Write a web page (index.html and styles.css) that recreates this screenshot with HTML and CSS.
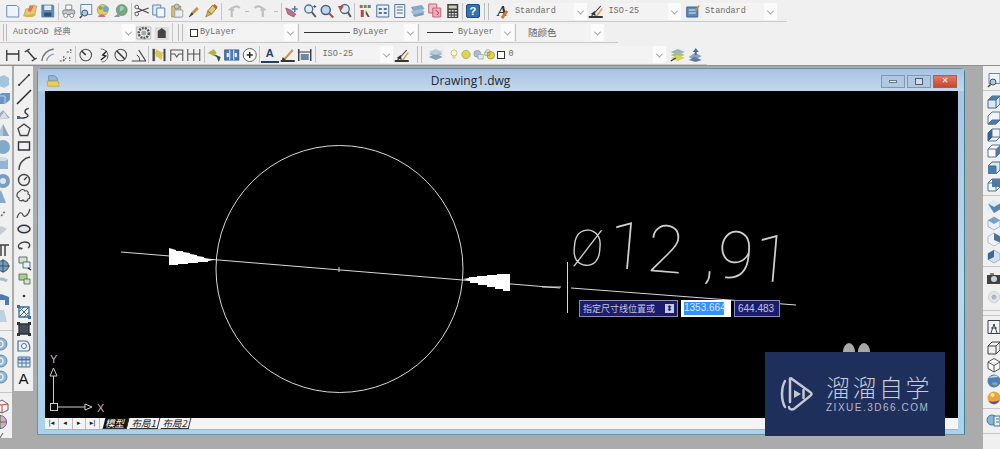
FILE: index.html
```html
<!DOCTYPE html>
<html lang="zh">
<head>
<meta charset="utf-8">
<title>Drawing1.dwg</title>
<link rel="stylesheet" href="styles.css">
</head>
<body>
<svg class="defs" aria-hidden="true">
<symbol id="new" viewBox="0 0 16 16"><path d="M2 2.500h10l2 2v9.500H2z" fill="#eef3fa" stroke="#5b86b5"/></symbol>
<symbol id="open" viewBox="0 0 16 16"><path d="M1 13 3 6l6-1 1-3 4 1-2 9z" fill="#e6c25c" stroke="#a98a3a" stroke-width=".6"/><path d="M7 2l4 1-3 6-3-1z" fill="#d96b4e"/><path d="M1 14l8-3 4 1-3 2z" fill="#d9a83c"/></symbol>
<symbol id="doc" viewBox="0 0 16 16"><path d="M3 2h7l3 3v3H3z" fill="#8fb3d6" stroke="#4b7295" stroke-width=".7"/><path d="M1 8h13l1 6H2z" fill="#f2cd3f" stroke="#b6952a" stroke-width=".7"/></symbol>
<symbol id="save" viewBox="0 0 16 16"><path d="M2 2h11l1 1v11H2z" fill="#4f7fb5" stroke="#2f5c90" stroke-width=".6"/><rect x="4.500" y="2.500" width="7" height="4.500" fill="#dfe9f4"/><rect x="4.500" y="9.500" width="7" height="4" fill="#1e3f6b"/></symbol>
<symbol id="plot" viewBox="0 0 16 16"><path d="M5 2h6v5H5z" fill="#fff" stroke="#666" stroke-width=".8"/><rect x="2" y="7" width="12" height="4.500" rx="1.500" fill="#b8c4d2" stroke="#666" stroke-width=".8"/><circle cx="5" cy="12.500" r="2" fill="#fff" stroke="#666" stroke-width=".8"/><circle cx="11" cy="12.500" r="2" fill="#fff" stroke="#666" stroke-width=".8"/></symbol>
<symbol id="preview" viewBox="0 0 16 16"><path d="M3 1.500h11v10H3z" fill="#eef3fa" stroke="#5b7fa5"/><circle cx="7" cy="10" r="3" fill="#a8c6e0" stroke="#345"/><path d="M4.500 12.500 2 15" stroke="#333" stroke-width="1.500"/></symbol>
<symbol id="publish" viewBox="0 0 16 16"><circle cx="7" cy="7" r="5.500" fill="#e3c84f" stroke="#8a7a30" stroke-width=".6"/><circle cx="10" cy="6" r="3" fill="#6d9bc8"/><path d="M2 13l5-2 3 3H3z" fill="#c55b7a"/><circle cx="5" cy="5" r="1.800" fill="#5c9e5a"/></symbol>
<symbol id="globe" viewBox="0 0 16 16"><circle cx="9" cy="7" r="5.500" fill="#6aa36a" stroke="#4b7a55" stroke-width=".6"/><path d="M8 3c3 0 4 2 2 4s-3 1-3-1z" fill="#9dc3e6"/><path d="M1 14l5-4 1 4z" fill="#7d8ea0"/></symbol>
<symbol id="cut" viewBox="0 0 16 16"><path d="M1 4l14 6M1 10l14-5" stroke="#333" stroke-width="1.100" fill="none"/><circle cx="3" cy="4" r="1.800" fill="#fff" stroke="#555"/><circle cx="3" cy="11" r="1.800" fill="#fff" stroke="#555"/></symbol>
<symbol id="copy" viewBox="0 0 16 16"><path d="M2 2h8v10H2z" fill="#dfe9f4" stroke="#4f7aa8"/><path d="M6 5h8v9H6z" fill="#f4f8fc" stroke="#4f7aa8"/></symbol>
<symbol id="paste" viewBox="0 0 16 16"><path d="M3 3h9v11H3z" fill="#dcb96a" stroke="#8d7440" stroke-width=".7"/><circle cx="8" cy="3.500" r="2.500" fill="#b9c6a8" stroke="#667" stroke-width=".7"/><path d="M6 7h8v7H6z" fill="#e9eef3" stroke="#6c8a9a" stroke-width=".7"/></symbol>
<symbol id="brush" viewBox="0 0 16 16"><path d="M3 14l3-5 2 2-4 3z" fill="#333"/><path d="M6 9l5-5 2 2-5 5z" fill="#c0862e"/></symbol>
<symbol id="match" viewBox="0 0 16 16"><path d="M2 14l2-6 4 3z" fill="#d6a53a" stroke="#7a5d22" stroke-width=".6"/><path d="M4 8l5-6 4 3-5 6z" fill="#e5c95a" stroke="#333" stroke-width=".6"/><path d="M11 1l3 3-2 2-3-3z" fill="#c5552f"/></symbol>
<symbol id="undo" viewBox="0 0 16 16"><path d="M5 14V7c0-3 5-5 8-2" stroke="#bbb" stroke-width="2.200" fill="none"/><path d="M1 7l4-3 3 4z" fill="#bbb"/></symbol>
<symbol id="redo" viewBox="0 0 16 16"><path d="M11 14V7c0-3-5-5-8-2" stroke="#bbb" stroke-width="2.200" fill="none"/><path d="M15 7l-4-3-3 4z" fill="#bbb"/></symbol>
<symbol id="pan" viewBox="0 0 16 16"><path d="M2 5l5 2 5 4-2 3-6-3z" fill="#b5657c" stroke="#6b3a4a" stroke-width=".6"/><path d="M11 3v6M8 6h6" stroke="#3a6ea5" stroke-width="1.500"/></symbol>
<symbol id="zoomr" viewBox="0 0 16 16"><circle cx="7" cy="6" r="4" fill="#dfeaf5" stroke="#40607f" stroke-width="1.300"/><path d="M10 9l4 5" stroke="#444" stroke-width="2"/><path d="M13 2v3M11.500 3.500h3" stroke="#444"/></symbol>
<symbol id="zoomw" viewBox="0 0 16 16"><circle cx="7" cy="7" r="4.500" fill="#bcd3ea" stroke="#305679" stroke-width="1.500"/><path d="M10.500 10.500l4 4" stroke="#a83b2e" stroke-width="2.200"/></symbol>
<symbol id="zoomp" viewBox="0 0 16 16"><circle cx="8" cy="6" r="4.500" fill="#dfeaf5" stroke="#40607f" stroke-width="1.300"/><path d="M11 9l3 5" stroke="#444" stroke-width="2"/><path d="M1 3h6L4 8z" fill="#a33c3c"/></symbol>
<symbol id="props" viewBox="0 0 16 16"><path d="M2 1h12v9H2z" fill="#f6f0d8"/><path d="M3 2h3v3H3z" fill="#c53c8a"/><path d="M7 2h3v3H7z" fill="#3c9a4e"/><path d="M11 2h3v3h-3z" fill="#3c6ec5"/><path d="M4 7h3v7H4z" fill="#b03535"/><path d="M9 7l4 7h-2l-2-3z" fill="#444"/></symbol>
<symbol id="grid" viewBox="0 0 16 16"><path d="M2 2h12v12H2z" fill="#e8eef5" stroke="#3d6690"/><path d="M4 5h3v2H4zM9 5h3v2H9zM4 9h3v2H4zM9 9h3v2H9z" fill="#3d6690"/></symbol>
<symbol id="sheet" viewBox="0 0 16 16"><path d="M3 1.500h10v13H3z" fill="#eef3fa" stroke="#48698c"/><path d="M5 4h6M5 7h6M5 10h6" stroke="#3d6690" stroke-width="1.200"/></symbol>
<symbol id="layersb" viewBox="0 0 16 16"><path d="M1 4l11-2 3 4-11 3z" fill="#7ba0c2"/><path d="M1 8l11-2 3 3-11 4z" fill="#98b8d4"/><path d="M3 12l11-3v3l-9 2z" fill="#6f95b8"/></symbol>
<symbol id="markup" viewBox="0 0 16 16"><path d="M2 1h8v9H2z" fill="#efb9c4" stroke="#c0566b"/><path d="M6 5h8v9H6z" fill="#e9a5b3" stroke="#c0566b"/><path d="M9 7l3 3-2 2" stroke="#a02b40" fill="none"/></symbol>
<symbol id="calc" viewBox="0 0 16 16"><rect x="2.500" y="1" width="11" height="14" fill="#2c2c2c"/><rect x="4" y="2.500" width="8" height="3" fill="#c9c9b6"/><path d="M4 7h2v1.500H4zM7 7h2v1.500H7zM10 7h2v1.500h-2zM4 10h2v1.500H4zM7 10h2v1.500H7zM10 10h2v1.500h-2zM4 12.500h2V14H4zM7 12.500h2V14H7zM10 12.500h2V14h-2z" fill="#ddd"/></symbol>
<symbol id="dimstyle" viewBox="0 0 16 16"><path d="M1 14h14" stroke="#222" stroke-width="1.800"/><path d="M3 14 13 3" stroke="#222" stroke-width="1.100"/><path d="M8 13l6-8 1 1-5 7z" fill="#d29a3a"/><path d="M3 11l4-3 1 5z" fill="#222"/></symbol>
<symbol id="tstyle" viewBox="0 0 16 16"><path d="M2 4h11v10H2z" fill="#4d7faf" stroke="#2d5680"/><path d="M4 7h7M4 10h7" stroke="#dbe7f2"/><path d="M10 8l4-6 1 1-4 6z" fill="#c9872f"/></symbol>
<symbol id="ws1" viewBox="0 0 16 16"><circle cx="8" cy="8" r="5" fill="none" stroke="#444" stroke-width="2.500" stroke-dasharray="2 1"/><circle cx="8" cy="8" r="2.500" fill="#8aa"/><path d="M1 2h14v12H1z" fill="none" stroke="#999" stroke-width=".7"/></symbol>
<symbol id="ws2" viewBox="0 0 16 16"><path d="M1 2h14v13H1z" fill="#dbdbdb"/><path d="M4 13V6l4-3 4 3v7z" fill="#333"/></symbol>
<symbol id="dlin" viewBox="0 0 16 16"><path d="M2 3v11M14 3v11M2 7h12" stroke="#222" stroke-width="1.300" fill="none"/></symbol>
<symbol id="dali" viewBox="0 0 16 16"><path d="M2 5l5-3M9 14l5-3M4 3l8 9" stroke="#222" stroke-width="1.400" fill="none"/></symbol>
<symbol id="darc" viewBox="0 0 16 16"><path d="M2 14C3 7 8 3 14 2" stroke="#666" stroke-width="1.400" fill="none"/><path d="M7 14C7 11 10 8 14 7" stroke="#7a8ea5" stroke-width="1.200" fill="none"/></symbol>
<symbol id="dord" viewBox="0 0 16 16"><path d="M2 14h4l3-4M9 5h3M13 2v4M6 9v5M12 10v4" stroke="#444" fill="none" stroke-dasharray="2 1"/></symbol>
<symbol id="drad" viewBox="0 0 16 16"><circle cx="8" cy="8" r="5.800" fill="none" stroke="#444" stroke-width="1.100"/><path d="M8 8 4 4" stroke="#222" stroke-width="1.600"/></symbol>
<symbol id="djog" viewBox="0 0 16 16"><path d="M5 2c5 0 8 4 7 8s-4 5-6 5" stroke="#555" fill="none"/><path d="M11 4 7 8l3 1-5 4" stroke="#111" stroke-width="1.400" fill="none"/></symbol>
<symbol id="ddia" viewBox="0 0 16 16"><circle cx="8" cy="8" r="5.800" fill="none" stroke="#444" stroke-width="1.100"/><path d="M4 4l8 8" stroke="#222" stroke-width="1.600"/></symbol>
<symbol id="dang" viewBox="0 0 16 16"><path d="M1 14h14L8 3" stroke="#333" fill="none" stroke-width="1.200"/><path d="M6 8c2 1 3 3 3 6" stroke="#333" fill="none"/></symbol>
<symbol id="dquick" viewBox="0 0 16 16"><path d="M2 2h2v12H2zM13 2h1.500v12H13zM2 6h12" fill="#333" stroke="#333" stroke-width=".4"/><path d="M5 2l7 4-1 7-6-4z" fill="#d7c33c"/></symbol>
<symbol id="dbase" viewBox="0 0 16 16"><path d="M2 14V3h12v11M2 7h4l2 3 2-3h4" stroke="#444" fill="none" stroke-width="1.100"/></symbol>
<symbol id="dcont" viewBox="0 0 16 16"><path d="M2 14V2M8 14V2M14 14V2M2 7h12" stroke="#444" fill="none" stroke-width="1.100"/></symbol>
<symbol id="dlead" viewBox="0 0 16 16"><path d="M3 5l8 5" stroke="#3b3b3b" stroke-width="1.300"/><path d="M1 6l6-4 3 4-3 3z" fill="#a7b03a"/><path d="M9 8l5 2-2 5z" fill="#26452a"/></symbol>
<symbol id="dtol" viewBox="0 0 16 16"><rect x="1" y="3" width="14" height="10" fill="#3a73b0" stroke="#1e4a7c"/><path d="M6 3v10M10 3v10" stroke="#e7eef5"/><rect x="3" y="6" width="2" height="4" fill="#fff"/><rect x="11" y="6" width="2" height="4" fill="#fff"/></symbol>
<symbol id="dcen" viewBox="0 0 16 16"><circle cx="8" cy="8" r="6.500" fill="#fff" stroke="#555"/><path d="M5 8h6M8 5v6" stroke="#111" stroke-width="1.500"/></symbol>
<symbol id="dang2" viewBox="0 0 16 16"><path d="M1 14h14" stroke="#222" stroke-width="1.800"/><path d="M4 13 13 3" stroke="#c98a2f" stroke-width="2"/><path d="M3 10l4 4H2z" fill="#222"/></symbol>
<symbol id="dupd" viewBox="0 0 16 16"><path d="M2 2v12M14 2v12" stroke="#222" stroke-width="1.400"/><path d="M2 5h12" stroke="#222" stroke-width="1.200"/><rect x="4" y="7" width="8" height="6" fill="#5a7d9e"/></symbol>
<symbol id="layers" viewBox="0 0 16 16"><path d="M8 4l7 3-7 3-7-3z" fill="#98b0c8"/><path d="M8 7l7 3-7 3-7-3z" fill="#7c97b2"/><path d="M8 2l7 3-7 3-7-3z" fill="#b7c8d9"/></symbol>
<symbol id="bulb" viewBox="0 0 16 16"><circle cx="8" cy="6" r="4" fill="#fffbe5" stroke="#c4ad3a"/><path d="M6.500 10h3v3h-3z" fill="#e9e2b0" stroke="#b8ab65" stroke-width=".5"/></symbol>
<symbol id="sun" viewBox="0 0 16 16"><circle cx="8" cy="8" r="5.500" fill="#e9cf38" stroke="#7da35c"/></symbol>
<symbol id="free" viewBox="0 0 16 16"><circle cx="7" cy="7" r="4.500" fill="#a5b9c9" stroke="#7a8fa1"/><path d="M8 8h7v6H8z" fill="#dfe8ef" stroke="#8aa0b2"/></symbol>
<symbol id="lock" viewBox="0 0 16 16"><circle cx="9" cy="9" r="5" fill="#e5cf3c" stroke="#8a8a2a"/><path d="M2 4c0-3 6-3 6 0M1 5h7v4H1z" fill="none" stroke="#8a8a2a"/></symbol>
<symbol id="lcur" viewBox="0 0 16 16"><path d="M1 5l7-3 7 3-7 3z" fill="#8ea9c2"/><path d="M1 8l7-3 7 3-7 3z" fill="#9cc06a"/><path d="M1 11l7-3 7 3-7 3z" fill="#d7cc46"/><path d="M1 14l5-3" stroke="#222" stroke-width="1.300"/></symbol>
<symbol id="lprev" viewBox="0 0 16 16"><path d="M2 10l6-4 7 3-7 4z" fill="#7c97b2"/><path d="M2 13l6-3 7 3-6 2z" fill="#4d6f94"/><path d="M6 5l3-4 3 4h-2v3H8V5z" fill="#37618c"/></symbol>
<symbol id="line" viewBox="0 0 16 16"><path d="M3 13 13 3" stroke="#333" stroke-width="1.200"/><circle cx="3" cy="13" r="1" fill="#222"/><circle cx="13" cy="3" r="1" fill="#222"/></symbol>
<symbol id="ray" viewBox="0 0 16 16"><path d="M1 15 15 1" stroke="#111" stroke-width="1.500"/></symbol>
<symbol id="poly" viewBox="0 0 16 16"><path d="M2 12c3 2 9 1 10-1s-4-2-3-5 4-2 3-3" stroke="#222" stroke-width="1.400" fill="none"/><path d="M1 11h3v3H1z" fill="#2f5f90"/></symbol>
<symbol id="pgon" viewBox="0 0 16 16"><path d="M8 2l6 4.500-2.300 7H4.300L2 6.500z" fill="none" stroke="#333" stroke-width="1.300"/></symbol>
<symbol id="rect" viewBox="0 0 16 16"><path d="M2.500 4h11v8h-11z" fill="#eef3f8" stroke="#222" stroke-width="1.400"/></symbol>
<symbol id="arc" viewBox="0 0 16 16"><path d="M3 15C3 8 8 3 14 2" stroke="#333" stroke-width="1.500" fill="none"/></symbol>
<symbol id="circ" viewBox="0 0 16 16"><circle cx="8" cy="8" r="5.500" fill="none" stroke="#333" stroke-width="1.400"/><path d="M8 8l3-3" stroke="#333" stroke-width="1.200"/></symbol>
<symbol id="cloud" viewBox="0 0 16 16"><path d="M4 3c1-2 4-2 5 0 2-1 4 1 3 3 3 1 2 5 0 5 0 3-4 3-5 1-2 2-5 0-4-2-3-1-3-5 1-7z" fill="#eee" stroke="#333" stroke-width="1.100"/></symbol>
<symbol id="spl" viewBox="0 0 16 16"><path d="M1 13C3 6 6 7 7 10s5 1 7-6" stroke="#333" stroke-width="1.100" fill="none"/></symbol>
<symbol id="ell" viewBox="0 0 16 16"><ellipse cx="8" cy="8" rx="6" ry="3.800" fill="#dde6ee" stroke="#222" stroke-width="1.500"/></symbol>
<symbol id="ella" viewBox="0 0 16 16"><path d="M4 11C0 8 4 4 9 4s6 4 3 6" fill="none" stroke="#333" stroke-width="1.300"/><path d="M3 9l2 3 2-2z" fill="#333"/></symbol>
<symbol id="ins" viewBox="0 0 16 16"><path d="M3 2h8v6H3z" fill="#cfe3bf" stroke="#345" stroke-width=".8"/><path d="M7 7h7v6H7z" fill="#e9f0f5" stroke="#345" stroke-width=".8"/><path d="M12 13l3 2" stroke="#111" stroke-width="1.500"/></symbol>
<symbol id="blk" viewBox="0 0 16 16"><path d="M3 3h8v6H3z" fill="#a6c985" stroke="#3c5c3c" stroke-width=".8"/><path d="M8 8h6v5H8z" fill="#d3e2b9" stroke="#3c5c3c" stroke-width=".8"/></symbol>
<symbol id="pt" viewBox="0 0 16 16"><circle cx="8" cy="8" r="1.300" fill="#223"/></symbol>
<symbol id="hat" viewBox="0 0 16 16"><path d="M3 3h10v10H3z" fill="none" stroke="#2f5f90" stroke-width="1.300"/><path d="M3 8l5-5M3 13 13 3M8 13l5-5M3 3l10 10" stroke="#2f5f90"/><path d="M1 1h3v3H1zM12 12h3v3h-3z" fill="#2f5f90"/></symbol>
<symbol id="grad" viewBox="0 0 16 16"><path d="M3 3h10v10H3z" fill="#33414f" stroke="#222" stroke-width="1.300"/><path d="M1 1h3v3H1zM12 1h3v3h-3zM1 12h3v3H1zM12 12h3v3h-3z" fill="#222"/></symbol>
<symbol id="reg" viewBox="0 0 16 16"><path d="M2 3h7c5 0 6 9 3 10H2z" fill="#e9f0f6" stroke="#3d6690" stroke-width="1.200"/><circle cx="8" cy="8" r="2.500" fill="#fff" stroke="#3d6690"/></symbol>
<symbol id="tab" viewBox="0 0 16 16"><path d="M2 3h12v10H2z" fill="#dfeaf5" stroke="#3d6da0"/><path d="M2 5.500h12" stroke="#3d6da0" stroke-width="2"/><path d="M6 3v10M10 3v10M2 9h12" stroke="#3d6da0"/></symbol>
<symbol id="cube" viewBox="0 0 16 16"><path d="M2 6l4-4h8v8l-4 4H2z" fill="#dce8f3" stroke="#3a5e85"/><path d="M2 6l4-4h8l-4 4z" fill="#3d73a8"/><path d="M2 6h8v8M10 6l4-4" stroke="#3a5e85" fill="none"/></symbol>
<symbol id="cubef" viewBox="0 0 16 16"><path d="M2 6h8v8H2z" fill="#3d73a8"/><path d="M2 6l4-4h8v8l-4 4V6z" fill="#dce8f3" stroke="#3a5e85"/></symbol>
<symbol id="cubeb" viewBox="0 0 16 16"><path d="M2 6l4-4h8v8l-4 4H2z" fill="#f0f4f8" stroke="#4d6a88"/><path d="M6 2h8v8H6z" fill="#3d73a8"/><path d="M2 6h8v8" fill="none" stroke="#4d6a88"/></symbol>
<symbol id="cubet" viewBox="0 0 16 16"><path d="M2 6l4-4h8v8l-4 4H2z" fill="#f0f4f8" stroke="#4d6a88"/><path d="M2 14l4-4h8l-4 4z" fill="#3d73a8" stroke="#3a5e85"/></symbol>
<symbol id="cubel" viewBox="0 0 16 16"><path d="M2 6l4-4v8l-4 4z" fill="#24598f" stroke="#24598f"/><path d="M6 2h8v8H6z" fill="#f0f4f8" stroke="#4d6a88"/><path d="M2 14h8l4-4" fill="none" stroke="#4d6a88"/></symbol>
<symbol id="cuber" viewBox="0 0 16 16"><path d="M2 6l4-4h8v8l-4 4H2z" fill="#fff" stroke="#4d6a88"/><path d="M10 6l4-4v8l-4 4z" fill="#3d73a8"/><path d="M2 6h8v8" fill="none" stroke="#4d6a88"/></symbol>
<symbol id="iso" viewBox="0 0 16 16"><path d="M8 2l6 3.500v6L8 15l-6-3.500v-6z" fill="#dce8f3"/><path d="M2 5.500 8 9l6-3.500V11.500L8 15z" fill="#4a7cab"/></symbol>
<symbol id="iso2" viewBox="0 0 16 16"><path d="M8 2l6 3.500v6L8 15l-6-3.500v-6z" fill="#e8f0f7" stroke="#6288aa" stroke-width=".6"/><path d="M8 9l6-3.500-6-3.500-6 3.500z" fill="#6a9bc6"/></symbol>
<symbol id="iso3" viewBox="0 0 16 16"><path d="M8 2l6 3.500v6L8 15l-6-3.500v-6z" fill="#f2f6fa" stroke="#7d99b4" stroke-width=".6"/><path d="M8 2l6 3.500v6L8 9z" fill="#3d6a97"/></symbol>
<symbol id="iso4" viewBox="0 0 16 16"><path d="M8 2l6 3.500v6L8 15l-6-3.500v-6z" fill="#cfe0ee" stroke="#6d8eac" stroke-width=".6"/><path d="M2 5.500 8 2v7l-6 3z" fill="#2f5d8b"/></symbol>
<symbol id="cam" viewBox="0 0 16 16"><path d="M1 5h14v9H1z" fill="#333"/><circle cx="8" cy="9" r="3" fill="#c4d2dc"/><path d="M4 3h4v2H4z" fill="#777"/></symbol>
<symbol id="orb" viewBox="0 0 16 16"><circle cx="8" cy="8" r="5.500" fill="#e6e6e6" stroke="#ccc"/><circle cx="8" cy="8" r="2.500" fill="#a0b4c8"/></symbol>
<symbol id="view" viewBox="0 0 16 16"><path d="M2 1.500h12v13H2z" fill="#eef3fa" stroke="#333"/><path d="M5 14l3-9 3 9" fill="none" stroke="#333"/><path d="M5 9h6" stroke="#333"/></symbol>
<symbol id="wire" viewBox="0 0 16 16"><path d="M2 6l4-4h8v8l-4 4H2zM2 6h8v8M10 6l4-4" fill="none" stroke="#333"/></symbol>
<symbol id="hex" viewBox="0 0 16 16"><path d="M8 1.500l6 3.500v6.500L8 15l-6-3.500V5zM2 5l6 3.500L14 5M8 8.500V15" fill="#fff" stroke="#333" stroke-width=".9"/></symbol>
<symbol id="ball" viewBox="0 0 16 16"><circle cx="8" cy="8" r="6.500" fill="#3d78ad"/><path d="M3 5c3-3 8-3 9-1-3 0-7 1-9 1z" fill="#c7dbe9"/><path d="M6 10c2-1 5-1 6 1-2 2-5 2-6-1z" fill="#8b9aa7"/></symbol>
<symbol id="ball2" viewBox="0 0 16 16"><circle cx="8" cy="8" r="6.500" fill="#e8a12e"/><path d="M2.500 11c3 4 9 4 11-1-3 2-8 2-11 1z" fill="#4c3c9c"/><circle cx="6.500" cy="5" r="2" fill="#ffe79a"/></symbol>
<symbol id="pan3" viewBox="0 0 16 16"><circle cx="6" cy="8" r="5" fill="#7fb0d4" stroke="#3a6a90"/><path d="M8 4h6v10H8z" fill="#e5eef5" stroke="#3a6a90"/><path d="M10 7h3M10 10h3" stroke="#3a6a90"/></symbol>
<symbol id="s1" viewBox="0 0 16 16"><path d="M2 5l7-3 5 3v7l-5 3-7-3z" fill="#9ec0dc"/></symbol>
<symbol id="s2" viewBox="0 0 16 16"><path d="M1 6l6-3h8v7l-5 4H1z" fill="#5b8fbe"/><path d="M1 6h9v8" fill="none" stroke="#bcd4e8"/></symbol>
<symbol id="s3" viewBox="0 0 16 16"><path d="M-2 14 8 4l7 8z" fill="#98a9b9"/><path d="M4 13 9 6l4 6z" fill="#d6dfe7"/></symbol>
<symbol id="s4" viewBox="0 0 16 16"><path d="M8 1l6 12H2z" fill="#a9c3da"/><path d="M8 1l6 12H8z" fill="#7ea3c4"/></symbol>
<symbol id="s5" viewBox="0 0 16 16"><circle cx="8" cy="8" r="7" fill="#79a4ca"/></symbol>
<symbol id="s6" viewBox="0 0 16 16"><path d="M1 3h12v10H1z" fill="#8db1cf"/><ellipse cx="7" cy="3" rx="6" ry="2" fill="#c8dcec"/></symbol>
<symbol id="s7" viewBox="0 0 16 16"><circle cx="8" cy="8" r="7" fill="#6f98bd"/><circle cx="8" cy="8" r="3" fill="#d8e5ef"/></symbol>
<symbol id="s8" viewBox="0 0 16 16"><path d="M-2 14 6 1l5 13z" fill="#7ba6cc"/></symbol>
<symbol id="s9" viewBox="0 0 16 16"><path d="M0 13c3-3 3 0 6-3s2-3 5-5" stroke="#555" stroke-width="1.500" stroke-dasharray="2 1.500" fill="none"/></symbol>
<symbol id="s10" viewBox="0 0 16 16"><path d="M-2 10l8-6 6 3-8 7z" fill="#c3c9cf"/></symbol>
<symbol id="s11" viewBox="0 0 16 16"><path d="M0 4h14M2 4v11M6 4v11M10 4v11" stroke="#333" stroke-width="1.500"/></symbol>
<symbol id="s12" viewBox="0 0 16 16"><circle cx="8" cy="8" r="5.500" fill="#6b97bd" stroke="#345"/><path d="M8 1v14M1 8h14" stroke="#345"/></symbol>
<symbol id="s13" viewBox="0 0 16 16"><path d="M0 12C0 5 6 3 12 7" stroke="#a9b6c2" stroke-width="3" fill="none"/></symbol>
<symbol id="s14" viewBox="0 0 16 16"><path d="M0 6l6-3 8 3v8H0z" fill="#3d73a8"/><path d="M4 9h6v5H4z" fill="#eee"/></symbol>
<symbol id="s15" viewBox="0 0 16 16"><path d="M3 3h6l3 12H0z" fill="#b9cfe0"/></symbol>
<symbol id="s16" viewBox="0 0 16 16"><circle cx="6" cy="8" r="6" fill="#8ab0d0" stroke="#5a85aa"/><circle cx="5" cy="8" r="3" fill="none" stroke="#e0ebf3" stroke-width="1.500"/></symbol>
<symbol id="s17" viewBox="0 0 16 16"><path d="M7 2l6 4v6l-6 3-7-3V6z" fill="#f4f4f4" stroke="#555"/><path d="M7 7 0 6M7 7l6-1M7 7v8" stroke="#c33"/></symbol>
<symbol id="s18" viewBox="0 0 16 16"><circle cx="5" cy="8" r="6.500" fill="#d9a6c0" stroke="#5555aa"/><path d="M-2 8h13M5 1v14" stroke="#3b6e3b"/></symbol>
<symbol id="s19" viewBox="0 0 16 16"><circle cx="1" cy="4" r="2" fill="none" stroke="#444"/><circle cx="9" cy="11" r="2" fill="none" stroke="#444"/><path d="M8 2 1 13" stroke="#444"/></symbol>
</svg>

<div class="app">
  <header class="bars">
    <div class="row row-one">
      <svg class="i"><use href="#new"/></svg><svg class="i"><use href="#open"/></svg><svg class="i"><use href="#save"/></svg>
      <span class="sep"></span>
      <svg class="i"><use href="#plot"/></svg><svg class="i"><use href="#preview"/></svg><svg class="i"><use href="#publish"/></svg><svg class="i"><use href="#globe"/></svg>
      <span class="sep"></span>
      <svg class="i"><use href="#cut"/></svg><svg class="i"><use href="#copy"/></svg><svg class="i"><use href="#paste"/></svg><svg class="i"><use href="#brush"/></svg><svg class="i"><use href="#match"/></svg>
      <span class="sep"></span>
      <svg class="i undo-i"><use href="#undo"/></svg><span class="dash undo-d"></span><svg class="i redo-i"><use href="#redo"/></svg><span class="dash redo-d"></span>
      <span class="sep"></span>
      <svg class="i"><use href="#pan"/></svg><svg class="i"><use href="#zoomr"/></svg><svg class="i"><use href="#zoomw"/></svg><svg class="i"><use href="#zoomp"/></svg>
      <span class="sep"></span>
      <svg class="i"><use href="#props"/></svg><svg class="i"><use href="#grid"/></svg><svg class="i"><use href="#sheet"/></svg><svg class="i"><use href="#layersb"/></svg><svg class="i"><use href="#markup"/></svg><svg class="i"><use href="#calc"/></svg>
      <span class="sep"></span>
      <span class="help-ico">?</span>
      <span class="grip grip-one"></span>
      <span class="style-a">A</span>
      <div class="combo w75"><span class="mono">Standard</span></div>
      <svg class="i"><use href="#dimstyle"/></svg>
      <div class="combo w75 after-icon"><span class="mono">ISO-25</span></div>
      <svg class="i tiny-gap"><use href="#tstyle"/></svg>
      <div class="combo w75"><span class="mono">Standard</span></div>
    </div>

    <div class="row row-two">
      <div class="tool tool-ws">
        <span class="grip"></span>
        <div class="combo w125"><span class="mono">AutoCAD 经典</span></div>
        <svg class="i"><use href="#ws1"/></svg><svg class="i"><use href="#ws2"/></svg>
      </div>
      <div class="tool">
        <span class="grip grip-two"></span>
        <div class="combo w110"><span class="swatch"></span><span class="mono">ByLayer</span></div>
        <span class="sep"></span>
        <div class="combo w117"><span class="ltline"></span><span class="mono">ByLayer</span></div>
        <span class="sep"></span>
        <div class="combo w94"><span class="ltline short"></span><span class="mono">ByLayer</span></div>
        <span class="sep"></span>
        <div class="combo w87"><span class="cjk">随颜色</span></div>
      </div>
    </div>

    <div class="row row-three">
      <svg class="i"><use href="#dlin"/></svg><svg class="i"><use href="#dali"/></svg><svg class="i"><use href="#darc"/></svg><svg class="i"><use href="#dord"/></svg>
      <span class="sep"></span>
      <svg class="i"><use href="#drad"/></svg><svg class="i"><use href="#djog"/></svg><svg class="i"><use href="#ddia"/></svg><svg class="i"><use href="#dang"/></svg>
      <span class="sep"></span>
      <svg class="i"><use href="#dquick"/></svg><svg class="i"><use href="#dbase"/></svg><svg class="i"><use href="#dcont"/></svg>
      <span class="sep"></span>
      <svg class="i"><use href="#dlead"/></svg><svg class="i"><use href="#dtol"/></svg><svg class="i"><use href="#dcen"/></svg>
      <span class="sep"></span>
      <span class="text-a">A</span><svg class="i"><use href="#dang2"/></svg><svg class="i"><use href="#dupd"/></svg>
      <span class="sep"></span>
      <div class="combo w73"><span class="mono">ISO-25</span></div>
      <svg class="i"><use href="#dimstyle"/></svg>
      <span class="grip grip-three"></span>
      <svg class="i"><use href="#layers"/></svg>
      <div class="combo w221">
        <svg class="i sm"><use href="#bulb"/></svg><svg class="i sm"><use href="#sun"/></svg><svg class="i sm"><use href="#free"/></svg><svg class="i sm"><use href="#lock"/></svg>
        <span class="swatch tight"></span><span class="mono zero">0</span>
      </div>
      <svg class="i lc"><use href="#lcur"/></svg><svg class="i"><use href="#lprev"/></svg>
    </div>
  </header>

  <div class="main">
    <aside class="col col-a">
      <svg class="v"><use href="#s1"/></svg><svg class="v"><use href="#s2"/></svg><svg class="v"><use href="#s3"/></svg><svg class="v"><use href="#s4"/></svg><svg class="v"><use href="#s5"/></svg><svg class="v"><use href="#s6"/></svg><svg class="v"><use href="#s7"/></svg><svg class="v"><use href="#s8"/></svg><svg class="v"><use href="#s9"/></svg><svg class="v"><use href="#s10"/></svg><svg class="v va-gap"><use href="#s11"/></svg><svg class="v"><use href="#s12"/></svg><svg class="v"><use href="#s13"/></svg><svg class="v"><use href="#s14"/></svg><svg class="v"><use href="#s15"/></svg>
      <span class="hr"></span>
      <svg class="v"><use href="#s16"/></svg><svg class="v"><use href="#s16"/></svg><svg class="v"><use href="#s16"/></svg>
      <span class="hr"></span>
      <svg class="v"><use href="#s17"/></svg><svg class="v"><use href="#s18"/></svg><svg class="v"><use href="#s19"/></svg>
    </aside>
    <aside class="col col-b">
      <svg class="v"><use href="#line"/></svg><svg class="v"><use href="#ray"/></svg><svg class="v"><use href="#poly"/></svg><svg class="v"><use href="#pgon"/></svg><svg class="v"><use href="#rect"/></svg><svg class="v"><use href="#arc"/></svg><svg class="v"><use href="#circ"/></svg><svg class="v"><use href="#cloud"/></svg><svg class="v"><use href="#spl"/></svg><svg class="v"><use href="#ell"/></svg><svg class="v"><use href="#ella"/></svg><svg class="v"><use href="#ins"/></svg><svg class="v"><use href="#blk"/></svg><svg class="v"><use href="#pt"/></svg><svg class="v"><use href="#hat"/></svg><svg class="v"><use href="#grad"/></svg><svg class="v"><use href="#reg"/></svg><svg class="v"><use href="#tab"/></svg>
      <span class="big-a">A</span>
    </aside>

    <section class="win">
      <div class="title">
        <svg class="i title-ico"><use href="#doc"/></svg>
        <span class="title-text">Drawing1.dwg</span>
        <div class="ctrls">
          <span class="ctl"><span class="ctl-min"></span></span>
          <span class="ctl"><span class="ctl-max"></span></span>
          <span class="ctl ctl-close">✕</span>
        </div>
      </div>
      <div class="canvas">
        <svg class="draw" viewBox="45 91 913 327" width="913" height="327">
          <g class="thin">
            <circle cx="339.500" cy="269" r="123.500"/>
            <path d="M121 252 560 288"/>
            <path d="M567.500 262V313"/>
            <path d="M542 287H561M571 288 796 305"/>
            <path d="M339 267V272"/>
          </g>
          <polygon class="solid" points="169,248 176,250 176,251 183,251 183,252 190,253 190,254 197,255 197,256 204,257 204,258 214,260 208,261 208,262 198,262 198,263 188,263 188,264 178,264 178,265 169,265"/>
          <polygon class="solid" points="463,279 469,278 469,277 477,277 477,276 487,276 487,275 497,275 497,274 510,274 510,291 503,291 503,289 495,289 495,287 487,287 487,285 478,285 478,283 470,283 470,281"/>
          <g class="ucs">
            <path d="M53.500 376V403M57 407H85"/>
            <rect x="50.500" y="403.500" width="7" height="7"/>
            <path d="M53.500 368 57 376H50z"/>
            <path d="M85 404 92 407 85 410z"/>
          </g>
          <text class="ucs-t" x="50" y="363">Y</text>
          <text class="ucs-t" x="97" y="412">X</text>
          <text class="dimtext" x="569 607 646 703 716 753" y="264" transform="rotate(5 569 264)"><tspan class="dia">Ø</tspan>12,91</text>
          <ellipse class="blob" cx="849" cy="352" rx="6" ry="9"/>
          <ellipse class="blob" cx="864" cy="352" rx="6" ry="9"/>
        </svg>
        <div class="dyn">
          <div class="dyn-prompt"><span>指定尺寸线位置或</span><span class="dyn-key">⬍</span></div>
          <div class="dyn-input"><span class="dyn-sel">1353.664</span></div>
          <div class="dyn-val">644.483</div>
        </div>
      </div>
      <div class="tabs">
        <div class="tabnav"><span>|◂</span><span>◂</span><span>▸</span><span>▸|</span></div>
        <span class="tab active">模型</span><span class="tab">布局1</span><span class="tab">布局2</span>
      </div>
    </section>

    <aside class="col col-r">
      <svg class="v"><use href="#preview"/></svg>
      <span class="hr"></span>
      <svg class="v"><use href="#cube"/></svg><svg class="v"><use href="#cubet"/></svg><svg class="v"><use href="#cubel"/></svg><svg class="v"><use href="#cuber"/></svg><svg class="v"><use href="#cubef"/></svg><svg class="v"><use href="#cubeb"/></svg>
      <span class="hr"></span>
      <svg class="v"><use href="#iso"/></svg><svg class="v"><use href="#iso2"/></svg><svg class="v"><use href="#iso3"/></svg><svg class="v"><use href="#iso4"/></svg>
      <span class="hr"></span>
      <svg class="v"><use href="#cam"/></svg><svg class="v orb-i"><use href="#orb"/></svg>
      <span class="hr hr-top"></span>
      <span class="hr hr-second"></span>
      <svg class="v"><use href="#view"/></svg><svg class="v wire-i"><use href="#wire"/></svg><svg class="v"><use href="#hex"/></svg><svg class="v"><use href="#ball"/></svg><svg class="v"><use href="#ball2"/></svg>
      <span class="hr"></span>
      <svg class="v"><use href="#pan3"/></svg>
      <span class="hr hr-end"></span>
    </aside>
  </div>

  <div class="mark">
    <svg class="mark-logo" viewBox="0 0 34 36">
      <path d="M5 5C1 12 1 24 5 31" />
      <path d="M10 3c0-1 1-1 2 0l18 13c2 1 2 3 0 4L14 33c-3 1-5 0-5-2"/>
      <path d="M10 3V26"/>
      <path class="fillp" d="M14 14l7 4-7 4z"/>
      <path d="M23.500 14v8"/>
    </svg>
    <div class="mark-text">
      <div class="mark-cn">溜溜自学</div>
      <div class="mark-en">ZIXUE.3D66.COM</div>
    </div>
  </div>
</div>
</body>
</html>
```

FILE: styles.css
```css
* { box-sizing: border-box; }
html, body { margin: 0; height: 449px; overflow: hidden; }
body { background: #f0f0f0; font-family: "Liberation Sans", sans-serif; }
.defs { position: absolute; width: 0; height: 0; }

.app { position: relative; width: 1000px; height: 449px; display: flex; flex-direction: column; filter: blur(.45px); }

.bars { height: 65px; display: flex; flex-direction: column; flex: none; }
.row { height: 21px; display: flex; align-items: center; border-bottom: 1px solid #c9c9c9; background: #f0f0f0; }
.row-one { width: 787px; padding: 1px 0 0 4px; height: 22px; }
.row-two { width: 618px; padding-top: 1px; }
.row-three { width: 707px; padding: 2px 0 0 4px; height: 22px; }
.tool { display: flex; align-items: center; height: 100%; }
.tool-ws { width: 173px; border-right: 1px solid #c9c9c9; padding-left: 3px; }

.i { width: 17.500px; height: 16px; flex: none; padding: 0 .75px; opacity: .9; }
.i.sm { width: 12px; height: 13px; padding: 0; }
.lc { margin-left: 3px; }
.sep { width: 3px; height: 17px; flex: none; position: relative; }
.sep::after { content: ""; position: absolute; left: 1px; top: 0; bottom: 0; border-left: 1px solid #c4c4c4; }
.grip { width: 4px; height: 17px; flex: none; border-left: 1px solid #bcbcbc; border-right: 1px solid #bcbcbc; margin-right: 3px; }
.grip-one { margin: 0 5px 0 2px; width: 5px; }
.grip-two { margin: 0 4px 0 5px; width: 5px; }
.grip-three { margin: 0 5px 0 7px; width: 5px; }
.undo-i { margin-left: 3px; }
.dash { flex: none; position: relative; height: 3px; }
.dash::after { content: ""; position: absolute; top: 1px; right: 2px; width: 4px; border-top: 1px solid #bbb; }
.undo-d { width: 7px; }
.redo-d { width: 12px; }
.after-icon, .tiny-gap { margin-left: 3px; }

.help-ico { width: 14px; height: 14px; margin: 0 1.750px; flex: none; background: #3572b0; border: 1px solid #1f4c80; border-radius: 2px; color: #fff; font: bold 11px/12px "Liberation Sans", sans-serif; text-align: center; }
.style-a { width: 17.500px; flex: none; font: italic bold 15px/16px "Liberation Serif", serif; color: #333; text-align: center; position: relative; }
.style-a::after { content: ""; position: absolute; left: 9px; top: 7px; width: 3px; height: 9px; background: #c77a3a; transform: rotate(35deg); }
.text-a { width: 17.500px; height: 16px; flex: none; font: bold 11px/12px "Liberation Sans", sans-serif; color: #1c3f70; text-align: center; border-bottom: 2px solid #1c3f70; }

.combo { height: 17px; display: flex; align-items: center; padding-left: 3px; flex: none; position: relative; background: #f3f3f3; }
.combo::after { content: ""; position: absolute; right: 0; top: 0; bottom: 0; width: 13px; background: #fbfbfb; }
.combo::before { content: ""; position: absolute; right: 4px; top: 7px; width: 4px; height: 4px; border-right: 1px solid #9a9a9a; border-bottom: 1px solid #9a9a9a; transform: rotate(45deg) translate(-1px,-1px); z-index: 1; }
.w75 { width: 75px; margin-left: 1px; }
.w125 { width: 125px; }
.w110 { width: 110px; }
.w117 { width: 117px; }
.w94 { width: 94px; }
.w87 { width: 87px; }
.w73 { width: 73px; margin-left: 3px; }
.w221 { width: 221px; }
.mono { font: 8.500px/1 "Liberation Mono", "Noto Sans CJK SC", monospace; color: #6c6c6c; white-space: nowrap; }
.cjk { font: 9.500px/1 "Noto Sans CJK SC", sans-serif; color: #666; margin-left: 8px; }
.swatch { width: 8px; height: 8px; border: 1px solid #333; background: #fff; margin-right: 2px; flex: none; }
.swatch.tight { margin-left: 1px; }
.zero { margin-left: 2px; }
.ltline { width: 46px; border-top: 1px solid #333; margin: 0 3px 0 1px; flex: none; }
.ltline.short { width: 26px; margin-left: 4px; margin-right: 5px; }

.main { flex: 1; display: flex; background: #ababab; border-top: 1px solid #8f8f8f; min-height: 0; }
.col { background: #f0f0f0; display: flex; flex-direction: column; flex: none; overflow: hidden; }
.col-a { width: 12px; height: 372px; padding-top: 7px; }
.col-b { width: 19px; height: 325px; margin-left: 2px; padding-top: 6px; align-items: center; }
.col-r { width: 17px; padding-top: 6px; }
.v { width: 16px; height: 16px; margin-bottom: .6px; flex: none; opacity: .92; }
.col-a .v { margin-left: -5px; }
.col-r .v { margin-left: 3px; }
.va-gap { margin-top: 2px; }
.hr { flex: none; height: 1px; background: #c6c6c6; margin: 1.500px 0 2.500px; }
.col-a .hr { margin: 6px 0 5px; }
.orb-i { margin-top: 3px; }
.wire-i { margin-top: 4.400px; }
.hr-top { margin: 4.500px 0 4px; }
.hr-second { margin: 0 0 3px; }
.hr-end { margin: 5px 0 0; }
.big-a { font: 15px/15px "Liberation Sans", sans-serif; color: #111; flex: none; }

.win { width: 928px; height: 367px; margin: 2px 18px 0 4px; flex: none; padding: 0 6px 6px 7px; background: linear-gradient(#a6c4e2, #bcd6ec 60%, #a9d2ea); border: 1px solid #6f8f9f; border-right-color: #3f7f8f; border-radius: 5px 5px 0 0; display: flex; flex-direction: column; }
.title { height: 22px; display: flex; align-items: center; flex: none; background: linear-gradient(#a7c3e3, #c4d8ec); margin: 0 -6px 0 -7px; padding: 1px 7px 0 8px; position: relative; }
.title-ico { width: 14px; height: 14px; padding: 0; }
.title-text { flex: 1; text-align: center; font: 12px "Open Sans", sans-serif; color: #1d2733; }
.ctrls { display: flex; gap: 2px; margin-top: 1px; }
.ctl { width: 24px; height: 13px; background: #b0c8e0; border: 1px solid #7f99b2; display: flex; align-items: center; justify-content: center; }
.ctl-min { width: 8px; height: 3px; background: #f0f0f0; border: 1px solid #66788a; }
.ctl-max { width: 8px; height: 7px; background: #cfdceb; border: 1.500px solid #4d5d6e; }
.ctl-close { background: linear-gradient(#e07a64, #c9452f); border-color: #a7604f; color: #fff; font: bold 8px/1 "DejaVu Sans", sans-serif; }

.canvas { position: relative; height: 327px; background: #000; flex: none; overflow: hidden; }
.draw { display: block; }
.thin { fill: none; stroke: #d9d9d9; stroke-width: 1; }
.solid { fill: #fff; }
.ucs { fill: none; stroke: #cfcfcf; stroke-width: 1; }
.ucs-t { font: 11px "Liberation Sans", sans-serif; fill: #bdbdbd; }
.dimtext { font: 100 66px "Roboto", "Inter", sans-serif; fill: #cfcfcf; }
.dia { font-size: 50px; }
.blob { fill: #a8a8a8; }

.dyn { position: absolute; left: 534px; top: 209px; display: flex; gap: 3px; height: 17px; }
.dyn-prompt, .dyn-val { background: #1c1c6c; border: 1px solid #8c8cb4; color: #c4c4dc; font: 9px/15px "Noto Sans CJK SC", sans-serif; padding: 0 3px; }
.dyn-prompt { width: 99px; display: flex; justify-content: space-between; }
.dyn-key { width: 9px; height: 9px; margin-top: 3px; background: #c9c9e6; color: #1c1c6c; font: 8px/9px "DejaVu Sans", sans-serif; text-align: center; flex: none; }
.dyn-input { width: 50px; background: #fff; padding: 2px 3px; font: 10px/12px "Liberation Sans", sans-serif; }
.dyn-sel { background: #3390ff; display: block; width: 40px; height: 13px; white-space: nowrap; color: #d8e8ff; }
.dyn-val { width: 46px; font: 10px/15px "Liberation Sans", sans-serif; }

.tabs { height: 12px; flex: none; display: flex; align-items: stretch; background: #f4f4f4; border-bottom: 1px solid #9bb; }
.tabnav { display: flex; width: 55px; font: 7px/11px "DejaVu Sans", sans-serif; color: #111; }
.tabnav span { flex: 1; text-align: center; border-right: 1px solid #bbb; overflow: hidden; }
.tab { width: 28px; margin-left: 3px; font: 9.500px/11px "Noto Sans CJK SC", sans-serif; color: #222; text-align: center; border-bottom: 1px solid #333; border-right: 1px solid #333; transform: skewX(-14deg); }
.tab.active { background: #111; color: #fff; width: 24px; margin-left: 4px; }

.mark { position: absolute; left: 765px; top: 352px; width: 180px; height: 84px; background: #1f2f5c; display: flex; align-items: center; padding-left: 15px; gap: 13px; }
.mark-logo { width: 34px; height: 36px; fill: none; stroke: #c4c8d2; stroke-width: 2.500; flex: none; stroke-linecap: round; }
.mark-logo .fillp { fill: #c4c8d2; stroke: none; }
.mark-text { margin-left: -1px; }
.mark-cn { font: 300 24px/26px "Noto Sans CJK SC", sans-serif; color: #c8ccd6; letter-spacing: 2.500px; white-space: nowrap; }
.mark-en { font: 10px/12px "Liberation Sans", sans-serif; color: #b4b9c6; letter-spacing: 1.500px; white-space: nowrap; margin-top: 2px; }
```
